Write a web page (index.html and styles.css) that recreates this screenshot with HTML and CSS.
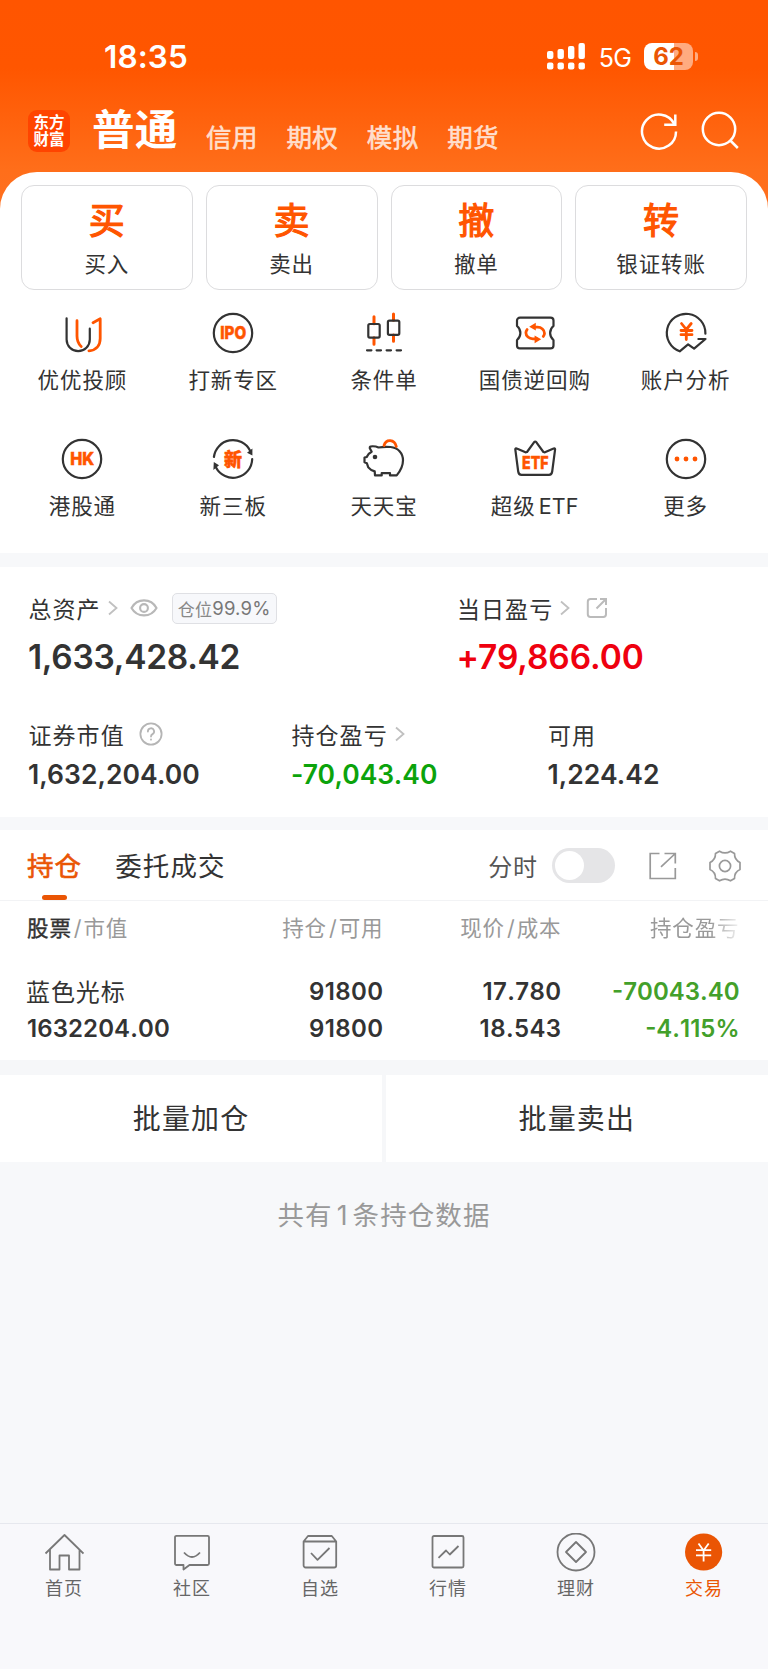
FILE: index.html
```html
<!DOCTYPE html>
<html lang="zh-CN">
<head>
<meta charset="utf-8">
<title>交易</title>
<link rel="stylesheet" href="styles.css">
</head>
<body>
<div class="app">
  <header class="top">
    <div class="status">
      <span class="time">18:35</span>
      <span class="status-right">
        <svg class="signal" width="38" height="27" viewBox="0 0 38 27" fill="#fff">
          <rect x="0" y="8" width="6.4" height="8" rx="2"/><rect x="10.5" y="6" width="6.4" height="10" rx="2"/><rect x="21" y="3" width="6.4" height="13" rx="2"/><rect x="31.5" y="0" width="6.4" height="16" rx="2"/>
          <rect x="0" y="19.5" width="6.4" height="7" rx="2"/><rect x="10.5" y="19.5" width="6.4" height="7" rx="2"/><rect x="21" y="19.5" width="6.4" height="7" rx="2"/><rect x="31.5" y="19.5" width="6.4" height="7" rx="2"/>
        </svg>
        <span class="net">5G</span>
        <span class="battery"><span class="cell">62</span><span class="nub"></span></span>
      </span>
    </div>
    <div class="titlebar">
      <div class="logo"><span>东方</span><span>财富</span></div>
      <nav class="accounts">
        <span class="current">普通</span><span>信用</span><span>期权</span><span>模拟</span><span>期货</span>
      </nav>
      <svg class="tool" width="42" height="42" viewBox="0 0 42 42" fill="none" stroke="#fff" stroke-width="2.5">
        <path d="M38 21.5A17 17 0 1 1 36.2 14"/><path d="M37.3 4.5V14.8H26.2"/>
      </svg>
      <svg class="tool" width="42" height="42" viewBox="0 0 42 42" fill="none" stroke="#fff" stroke-width="2.5">
        <circle cx="20" cy="19" r="16.2"/><path d="M30.8 30L38.8 38"/>
      </svg>
    </div>
  </header>

  <main class="sheet">
    <section class="actions">
      <div class="action"><b>买</b><span>买入</span></div>
      <div class="action"><b>卖</b><span>卖出</span></div>
      <div class="action"><b>撤</b><span>撤单</span></div>
      <div class="action"><b>转</b><span>银证转账</span></div>
    </section>

    <section class="grid">
      <div class="entry">
        <svg viewBox="0 0 48 48"><path class="d" d="M8.6 9.3V30.5a11.6 11.6 0 0 0 23.2 0V19.7"/><path class="o" d="M19 11.7V27c0 5 1 7.5 4.2 10.5M35 13.7L42.2 9.8V29.5c0 7.5-4.5 12-11.3 12.3"/></svg>
        <span>优优投顾</span>
      </div>
      <div class="entry">
        <svg viewBox="0 0 48 48"><circle class="d" cx="24" cy="24" r="19.2"/><text x="11.2" y="30.3" textLength="26" lengthAdjust="spacingAndGlyphs" font-size="17.5">IPO</text></svg>
        <span>打新专区</span>
      </div>
      <div class="entry">
        <svg viewBox="0 0 48 48"><path class="w" d="M14 7.7v7M14 28.7v6.6M33.5 5v6.3M33.5 26v6.3"/><rect class="d" x="8.3" y="15" width="11.4" height="13.6" rx="1.5"/><rect class="d" x="27.9" y="11.6" width="11.4" height="14.2" rx="1.5"/><path class="d" d="M7 41.3h4.4M16.6 41.3h4.4M26.6 41.3h4.4M36.600 41.3h4.4"/></svg>
        <span>条件单</span>
      </div>
      <div class="entry">
        <svg viewBox="0 0 48 48"><path class="d" d="M9 8.6H39.5a3 3 0 0 1 3 3V17c-4.5 3.5-4.5 10.5 0 14v5.4a3 3 0 0 1-3 3H9a3 3 0 0 1-3-3V31c4.5-3.5 4.5-10.5 0-14V11.600a3 3 0 0 1 3-3Z"/><path class="o" d="M23 18.2h3.5a7 6 0 0 1 7 6c0 1.2-.4 2.2-1.2 3.2M25.4 29.8h-3.5a7 6 0 0 1-7-6c0-1.2.4-2.2 1.2-3.2"/><path class="of" d="M18.2 17.7L24.8 13.8v7.7ZM30.2 30.3L23.6 34.2v-7.7Z"/></svg>
        <span>国债逆回购</span>
      </div>
      <div class="entry">
        <svg viewBox="0 0 48 48"><path class="d" d="M43.4 24.7A19.3 19.3 0 1 0 17.7 42.3L26.1 35.3L32.1 39.7L43.5 30H36.4"/><path class="o" d="M19.5 14.5L24.3 20.5L29.2 14.5M24.3 21V30.5M19 21.5H30M19 25.7H30"/></svg>
        <span>账户分析</span>
      </div>
      <div class="entry">
        <svg viewBox="0 0 48 48"><circle class="d" cx="24" cy="24" r="19.2"/><text x="12.3" y="30.3" textLength="24" lengthAdjust="spacingAndGlyphs" font-size="17.5">HK</text></svg>
        <span>港股通</span>
      </div>
      <div class="entry">
        <svg viewBox="0 0 48 48"><path class="d" d="M4.9 22A19.2 19.2 0 0 1 41 15.5M43.2 24A19.2 19.2 0 0 1 7 32.5"/><path class="df" d="M38 17.8L43.4 13.4V20.500ZM10 30.200L4.400 35L4.800 27Z"/><text x="15" y="30.5" font-size="18">新</text></svg>
        <span>新三板</span>
      </div>
      <div class="entry">
        <svg viewBox="0 0 48 48"><path class="d" d="M11.7 16.8L9.8 13.2Q9.5 11.4 11.5 11.3Q15.5 11 18.5 12.5Q24 11.5 30.5 12C38 12.6 43 18 43 25.3C43 31.5 40 36.5 36.7 40.4H30V38.2H21.7V40.4H15L14.7 36.4Q10.5 35.2 8.3 32.4L6.9 28.3L4.500 27.3V22.6L6.7 22Q8 18.5 11.7 16.8Z"/><circle class="df" cx="15" cy="22" r="2.3"/><path class="o" d="M24 10.5C26 3.8 34.500 4 36.300 11.500"/></svg>
        <span>天天宝</span>
      </div>
      <div class="entry">
        <svg viewBox="0 0 48 48"><path class="d" d="M4.3 14.3Q4.3 12.8 5.8 13.5L14.5 17.3L16 17L23 7.3Q24.2 6 25.4 7.3L32.4 17L33.9 17.3L42.6 13.5Q44.1 12.8 44.1 14.3L41.2 36.5Q40.8 39.8 38 39.8H10.5Q7.6 39.8 7.2 36.5Z"/><text x="11" y="34.200" textLength="26.500" lengthAdjust="spacingAndGlyphs" font-size="17.500">ETF</text></svg>
        <span>超级<i>ETF</i></span>
      </div>
      <div class="entry">
        <svg viewBox="0 0 48 48"><circle class="d" cx="24" cy="24" r="19.2"/><g class="of"><circle cx="15" cy="24" r="2.4"/><circle cx="24" cy="24" r="2.4"/><circle cx="33" cy="24" r="2.4"/></g></svg>
        <span>更多</span>
      </div>
    </section>

    <section class="assets">
      <div class="asset-row primary">
        <div>
          <div class="label">总资产
            <svg class="chev" width="10" height="16" viewBox="0 0 10 16"><path d="M1 1.5L8.500 8L1 14.500"/></svg>
            <svg class="eye" width="28" height="20" viewBox="0 0 28 20"><path d="M1.5 10C7 -.2 21 -.2 26.5 10C21 19.8 7 19.8 1.5 10Z"/><circle cx="14" cy="10" r="3.9"/></svg>
            <span class="badge">仓位<em>99.9%</em></span>
          </div>
          <div class="value big">1,633,428.42</div>
        </div>
        <div>
          <div class="label">当日盈亏
            <svg class="chev" width="10" height="16" viewBox="0 0 10 16"><path d="M1 1.5L8.5 8L1 14.5"/></svg>
            <svg class="share" width="22" height="22" viewBox="0 0 22 22"><path d="M11 2H4.5A2.7 2.7 0 0 0 1.8 4.7V17.3A2.7 2.7 0 0 0 4.5 20H17.3A2.7 2.7 0 0 0 20 17.3V11M14 2H20V8M20 2L10.5 11.5"/></svg>
          </div>
          <div class="value big up">+79,866.00</div>
        </div>
      </div>
      <div class="asset-row secondary">
        <div>
          <div class="label">证券市值
            <svg class="help" width="24" height="24" viewBox="0 0 24 24"><circle cx="12" cy="12" r="10.6"/><path d="M8.9 9.5A3.1 3.1 0 1 1 13.5 12.1Q12 12.9 12 14.5"/><path d="M12 17.300V17.700"/></svg>
          </div>
          <div class="value">1,632,204.00</div>
        </div>
        <div>
          <div class="label">持仓盈亏
            <svg class="chev" width="10" height="16" viewBox="0 0 10 16"><path d="M1 1.5L8.5 8L1 14.5"/></svg>
          </div>
          <div class="value down">-70,043.40</div>
        </div>
        <div>
          <div class="label">可用</div>
          <div class="value">1,224.42</div>
        </div>
      </div>
    </section>

    <section class="holdings">
      <div class="tabs">
        <span class="tab active">持仓</span>
        <span class="tab">委托成交</span>
        <span class="minute">分时</span>
        <span class="switch"></span>
        <svg class="export" width="28" height="28" viewBox="0 0 28 28"><path d="M10.5 1.5H1.2V26.5H26.3V16M15.5 1.5H26.3V11.5M26.3 1.5L12 14.8"/></svg>
        <svg class="gear" width="34" height="34" viewBox="0 0 34 34"><path d="M11.500 2.200Q17 5.600 22.500 2.200L26.500 4.600Q26.400 11 32 13.500V20.500Q26.400 23 26.500 29.400L22.500 31.800Q17 28.400 11.500 31.800L7.500 29.400Q7.600 23 2 20.500V13.500Q7.600 11 7.500 4.600Z"/><circle cx="17" cy="17" r="5.600"/></svg>
      </div>
      <div class="thead">
        <span><strong>股票</strong><i>/</i>市值</span><span>持仓<i>/</i>可用</span><span>现价<i>/</i>成本</span><span class="fade">持仓盈亏</span>
      </div>
      <div class="trow">
        <div><span class="name">蓝色光标</span><span>1632204.00</span></div>
        <div><span>91800</span><span>91800</span></div>
        <div><span>17.780</span><span>18.543</span></div>
        <div class="loss"><span>-70043.40</span><span>-4.115%</span></div>
      </div>
    </section>

    <section class="batch"><span>批量加仓</span><span>批量卖出</span></section>
    <p class="count">共有<i>1</i>条持仓数据</p>
  </main>

  <footer class="tabbar">
    <div class="item"><svg viewBox="0 0 40 40"><path d="M1.5 20.5L20.5 2L39.5 20.5M6 16.5V36.5H15.5V22.500H25V36.5H35.5V16.5"/></svg><span>首页</span></div>
    <div class="item"><svg viewBox="0 0 40 40"><path d="M4.5 2.8H35.5A1.5 1.5 0 0 1 37 4.3V30.5A1.5 1.5 0 0 1 35.5 32H17.5L11.5 36.5V32H4.5A1.5 1.5 0 0 1 3 30.5V4.3A1.5 1.5 0 0 1 4.5 2.8ZM12 19.5Q20 28.5 28 19.5"/></svg><span>社区</span></div>
    <div class="item"><svg viewBox="0 0 40 40"><path d="M3.6 8.5H36.2V32.5A2 2 0 0 1 34.2 34.5H5.6A2 2 0 0 1 3.6 32.5ZM3.6 8.5L8 3H31.8L36.2 8.5M11 20L17.5 26.8L29.5 15"/></svg><span>自选</span></div>
    <div class="item"><svg viewBox="0 0 40 40"><rect x="4.5" y="3" width="31" height="31.5" rx="1.5"/><path d="M10.5 24.8L18 17.5L21.8 21.5L30.5 13"/></svg><span>行情</span></div>
    <div class="item"><svg viewBox="0 0 40 40"><circle cx="20" cy="19" r="18.5"/><path d="M20 9L30 19L20 29L10 19Z"/></svg><span>理财</span></div>
    <div class="item on"><svg viewBox="0 0 40 40"><circle class="disc" cx="19.6" cy="19" r="18.6"/><path class="yen" d="M14.5 10.5L19.6 17.5L24.7 10.5M19.6 17.5V28.5M12 17.2H27.2M12 22.3H27.2"/></svg><span>交易</span></div>
  </footer>
</div>
</body>
</html>
```

FILE: styles.css
```css
* { box-sizing: border-box; }
body {
  margin: 0;
  background: #f7f8fa;
  color: #333;
  font-family: Inter, "Noto Sans CJK SC", sans-serif;
}
i, em { font-style: normal; }
svg { display: block; flex: none; }
.app { width: 768px; height: 1669px; display: flex; flex-direction: column; overflow: hidden; }

/* header */
.top {
  height: 210px;
  flex: none;
  background: linear-gradient(#ff5500 0, #ff5600 68px, #ff6e1a 170px, #ff7020 100%);
  color: #fff;
}
.status { height: 100px; padding: 14px 70px 0 104px; display: flex; align-items: center; justify-content: space-between; }
.time { font-size: 31.5px; font-weight: 600; letter-spacing: .1px; line-height: 40px; }
.status-right { display: flex; align-items: center; }
.signal { margin-top: -1px; }
.net { font-size: 25px; margin: 2px 13px 0 14px; line-height: 30px; letter-spacing: -.8px; }
.battery { display: flex; align-items: center; gap: 2px; margin-top: -1px; }
.cell {
  width: 49px; height: 27px; border-radius: 8px;
  background: linear-gradient(90deg, #fff 30px, #ffab80 30px);
  color: #ea5504; font-size: 24px; font-weight: 700; line-height: 27px; text-align: center;
}
.nub { width: 3px; height: 9px; border-radius: 0 4px 4px 0; background: #ffab80; }
.titlebar { height: 62px; padding: 0 27px 0 28px; display: flex; align-items: center; }
.logo {
  width: 42px; height: 42px; border-radius: 9px; background: #ff4400;
  display: flex; flex-direction: column; align-items: center; justify-content: center;
  font-size: 15.5px; font-weight: 700; line-height: 17px;
}
.accounts { flex: 1; display: flex; align-items: center; margin-left: 22px; line-height: 50px; }
.accounts span { font-size: 25.5px; letter-spacing: .4px; color: #ffdfcd; -webkit-text-stroke: .6px; margin: 13px 0 0 28.6px; }
.accounts .current { font-size: 42.5px; font-weight: 700; letter-spacing: .2px; color: #fff; -webkit-text-stroke: 0; margin: -2px 0 0; }
.tool + .tool { margin-left: 19px; }

/* sheet */
.sheet { flex: 1; margin-top: -38.5px; border-radius: 37px 37px 0 0; background: #fff; display: flex; flex-direction: column; }
.actions { padding: 13px 21px 0; display: grid; grid-template-columns: repeat(4, 1fr); gap: 13px; }
.action {
  height: 105px; border: 1.5px solid #dcdcde; border-radius: 13px;
  display: flex; flex-direction: column; align-items: center; padding-top: 12px;
}
.action b { font-size: 36px; font-weight: 400; -webkit-text-stroke: 1.2px; line-height: 46px; color: #ff5500; }
.action span { font-size: 21.5px; letter-spacing: .9px; line-height: 28px; margin-top: 6px; }
.grid { height: 263.5px; padding: 19.5px 7px 0; display: grid; grid-template-columns: repeat(5, 1fr); grid-auto-rows: 125.5px; }
.entry { display: flex; flex-direction: column; align-items: center; font-size: 21.5px; letter-spacing: .9px; line-height: 28px; }
.entry > span { margin-top: 9px; }
.entry i { margin-left: 3px; letter-spacing: .2px; }
.entry svg { width: 48px; height: 48px; }
.d, .o, .w { fill: none; stroke: #333; stroke-width: 2.2; stroke-linecap: round; stroke-linejoin: round; }
.o { stroke: #ff5500; stroke-width: 2.8; }
.w { stroke: #ff5500; stroke-width: 3; }
.of, .entry text { fill: #ff5500; }
.df { fill: #333; }
.entry text { font-weight: 800; letter-spacing: 0; stroke: #ff5500; stroke-width: .5; }

/* assets */
.assets { height: 277px; border-top: 14px solid #f7f8fa; border-bottom: 13px solid #f7f8fa; padding: 25px 28px 0; }
.asset-row { display: grid; }
.primary { grid-template-columns: 428.5px 1fr; height: 126px; }
.secondary { grid-template-columns: 263px 256.5px 1fr; }
.label { display: flex; align-items: center; height: 32px; font-size: 23px; letter-spacing: 1.1px; padding-left: .4px; white-space: nowrap; }
.chev, .eye, .share, .help { fill: none; stroke: #c0c0c0; stroke-width: 1.8; }
.chev { margin-left: 7px; }
.eye { margin-left: 12px; stroke: #b8b8b8; stroke-width: 2.1; }
.share { margin-left: 16px; stroke: #bbb; stroke-width: 2; }
.help { margin-left: 14px; stroke: #b5b5b5; stroke-linecap: round; }
.badge {
  margin-left: 14px; height: 31px; width: 105px; border: 1px solid #dfe0e4; border-radius: 5px; background: #f7f8fb;
  display: flex; align-items: center; justify-content: center; font-size: 17px; letter-spacing: .2px; color: #888;
}
.badge em { font-size: 18.5px; color: #777; }
.value { font-size: 26.5px; font-weight: 600; line-height: 36px; margin-top: 6px; letter-spacing: .05px; white-space: nowrap; }
.big { font-size: 33.5px; line-height: 40px; margin-top: 13px; letter-spacing: -.3px; }
.up { color: #ef000f; letter-spacing: -.1px; }
.down { color: #0ba30b; }

/* holdings */
.holdings { height: 245px; border-bottom: 15px solid #f6f7f9; }
.tabs { height: 71px; border-bottom: 1.5px solid #f2f3f5; padding: 1px 26px 0 27px; display: flex; align-items: center; }
.tab { font-size: 26.5px; letter-spacing: 1.1px; line-height: 70px; height: 69px; margin-right: 33px; position: relative; }
.active { color: #ea5504; -webkit-text-stroke: .6px; }
.active::after { content: ""; position: absolute; left: 15px; bottom: 0; width: 25px; height: 5px; border-radius: 2.5px; background: #ea5504; }
.minute { margin-left: auto; font-size: 24px; letter-spacing: .9px; color: #555; }
.switch { width: 63px; height: 35px; border-radius: 18px; background: #e5e5e7; margin-left: 14px; padding: 3px; }
.switch::before { content: ""; display: block; width: 29px; height: 29px; border-radius: 50%; background: #fff; }
.export, .gear { fill: none; stroke: #999; stroke-width: 1.7; margin-left: 34px; }
.gear { margin-left: 31px; stroke-linejoin: round; }
.thead, .trow { display: grid; grid-template-columns: 160px 196.500px 178px 178px; padding-left: 27px; }
.thead { height: 57px; line-height: 55px; font-size: 21.5px; letter-spacing: .9px; color: #999; white-space: nowrap; }
.thead span + span, .trow div + div { text-align: right; }
.thead i { margin: 0 1px 0 2px; }
.thead strong { font-weight: 400; -webkit-text-stroke: .4px; color: #333; }
.fade { -webkit-mask-image: linear-gradient(90deg, #000 83%, transparent 102%); mask-image: linear-gradient(90deg, #000 83%, transparent 102%); }
.trow { padding-top: 14.5px; font-size: 24px; font-weight: 600; letter-spacing: .1px; font-kerning: none; }
.trow div + div { letter-spacing: .4px; }
.trow span { display: block; height: 37.5px; line-height: 37.5px; white-space: nowrap; }
.trow .name { font-weight: 400; letter-spacing: .9px; margin-left: -1px; padding-top: 1px; }
.trow .loss { color: #43a02a; letter-spacing: 0; }

.batch { height: 87px; display: grid; grid-template-columns: 1fr 1fr; gap: 3.5px; background: #f6f7f9; }
.batch span { background: #fff; font-size: 28px; letter-spacing: 1.2px; line-height: 89px; height: 87px; text-align: center; }
.count { flex: 1; margin: 0; padding-top: 33px; background: #f7f8fa; text-align: center; font-size: 26.5px; letter-spacing: 1.1px; line-height: 40px; color: #999; }
.count i { margin: 0 4px; }

/* bottom navigation */
.tabbar { flex: none; height: 146px; border-top: 1.5px solid #e6e8ee; background: #f8f8fb; display: grid; grid-template-columns: repeat(6, 1fr); }
.item { display: flex; flex-direction: column; align-items: center; padding-top: 8.500px; font-size: 18px; letter-spacing: .9px; line-height: 26px; color: #666; }
.item span { margin-top: 3px; }
.item svg { width: 40px; height: 40px; fill: none; stroke: #777; stroke-width: 1.8; stroke-linejoin: round; }
.item .disc { fill: #ea5504; stroke: none; }
.item .yen { stroke: #fff; }
.on { color: #ea5504; }
```
